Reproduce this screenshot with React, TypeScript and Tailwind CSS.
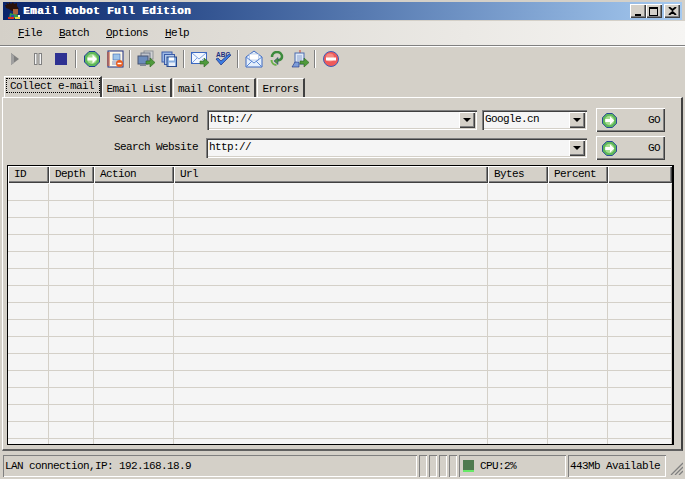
const raised =
  "shadow-[inset_1px_1px_0_#ffffff,inset_-1px_-1px_0_#404040,inset_-2px_-2px_0_#808080]";
const sunken =
  "shadow-[inset_1px_1px_0_#808080,inset_2px_2px_0_#404040,inset_-1px_-1px_0_#ffffff,inset_-2px_-2px_0_#d4d0c8]";
const thinSunken = "shadow-[inset_1px_1px_0_#808080,inset_-1px_-1px_0_#ffffff]";
const text = "text-[11px] tracking-[-0.6px] text-black whitespace-pre";

function GoIcon({ size = 16 }: { size?: number }) {
  return (
    <svg width={size} height={size} viewBox="0 0 16 16">
      <path d="M5 .5h6L15.500 5v6L11 15.500H5L.5 11V5z" fill="#5fb85a" stroke="#1c3f94" />
      <circle cx="8" cy="8" r="5" fill="#a4dc8e" />
      <path d="M3.500 6.500h5V3.500L13 8l-4.500 4.500v-3h-5z" fill="#fff" />
    </svg>
  );
}

function AppIcon() {
  return (
    <svg width="18" height="18" viewBox="0 0 18 18" className="ml-[1px]">
      <path d="M1 3l2 0-1-2 3 1 0-2 2 2 2-2 1 2 3-1 0 3 2 3-3 2H8L5 7 2 6z" fill="#2a120c" />
      <path d="M9 7h5v5l-2 1H9z" fill="#a8623a" />
      <path d="M6 11l3 1 5 1 1 3H5z" fill="#2f9a4a" />
      <path d="M7 13h3v2H7z" fill="#2848b0" />
      <path d="M11 15h5v2h-5z" fill="#e8d840" />
      <path d="M4 15h6v2H4z" fill="#d83020" />
      <path d="M14 13h2v2h-2z" fill="#f0f0f0" />
    </svg>
  );
}

function Play() {
  return (
    <svg width="16" height="16" viewBox="0 0 16 16">
      <path d="M4 2l8 6-8 6z" fill="#808080" />
      <path d="M4 2l0 12 3-2V5z" fill="#a0a0a0" />
    </svg>
  );
}

function Pause() {
  return (
    <svg width="16" height="16" viewBox="0 0 16 16">
      <path d="M4 2h3.500v12H4zM8.500 2H12v12H8.500z" fill="#808080" />
      <path d="M5 3h1.500v10H5zM9.500 3H11v10H9.500z" fill="#f4f4f4" />
    </svg>
  );
}

function Stop() {
  return (
    <svg width="16" height="16" viewBox="0 0 16 16">
      <rect x="2" y="2" width="12" height="12" fill="#2e3192" />
    </svg>
  );
}

function Notebook() {
  return (
    <svg width="18" height="18" viewBox="0 0 18 18">
      <rect x="2" y="1" width="15" height="16" fill="#fdf8e8" stroke="#1c2f80" />
      <path d="M1 3h3M1 5h3M1 7h3M1 9h3M1 11h3M1 13h3M1 15h3" stroke="#c04020" />
      <rect x="7" y="4" width="7" height="6" fill="#9cc4ea" stroke="#3c66b0" strokeWidth=".6" />
      <path d="M6 12h5M6 14h4" stroke="#8090c0" />
      <circle cx="13.500" cy="13.500" r="3.500" fill="#e85a1c" />
      <path d="M11.500 13.500h4" stroke="#fff" strokeWidth="1.500" />
    </svg>
  );
}

function Monitors() {
  return (
    <svg width="18" height="18" viewBox="0 0 18 18">
      <rect x="7" y="1" width="9" height="8" fill="#d0d2d4" stroke="#909498" />
      <rect x="4" y="3" width="9" height="8" fill="#c0c4cc" stroke="#707888" />
      <rect x="1" y="6" width="10" height="8" fill="#6c8cbc" stroke="#485470" />
      <path d="M3 14h6v2H3z" fill="#808898" />
      <path d="M9 11h4V8l5 4.500L13 17v-3H9z" fill="#4f9a3c" stroke="#2c6420" strokeWidth=".6" />
    </svg>
  );
}

function Floppies() {
  return (
    <svg width="16" height="16" viewBox="0 0 16 16">
      <rect x="1" y="1" width="10" height="10" fill="#9cb8e4" stroke="#3c5ca8" />
      <rect x="3.500" y="3.500" width="10" height="10" fill="#b4ccec" stroke="#3c5ca8" />
      <rect x="6" y="6" width="9.500" height="9.500" fill="#88aee0" stroke="#28488c" />
      <rect x="8" y="6.500" width="5" height="3" fill="#fff" />
      <rect x="8" y="11.500" width="6" height="3.500" fill="#e8eef8" />
    </svg>
  );
}

function MailSend() {
  return (
    <svg width="18" height="18" viewBox="0 0 18 18">
      <rect x=".5" y="2.500" width="15" height="11" fill="#f2f7ff" stroke="#3c68c0" />
      <path d="M1 3l7 6 7-6M1 13l5-5M15 13l-4-4" fill="none" stroke="#80a4e0" />
      <path d="M9 11h4V8l5 4.500L13 17v-3H9z" fill="#4f9a3c" stroke="#2c6420" strokeWidth=".6" />
    </svg>
  );
}

function SpellCheck() {
  return (
    <svg width="18" height="18" viewBox="0 0 18 18">
      <text x="2" y="6.500" fontSize="6.500" fontWeight="bold" fontFamily="Liberation Sans, sans-serif" fill="#1c2f80">
        ABC
      </text>
      <path d="M2 9l5 6L17 5l-2-1-8 7-3-3z" fill="#3c7ce0" stroke="#1c2f80" strokeWidth=".7" />
    </svg>
  );
}

function MailOpen() {
  return (
    <svg width="18" height="18" viewBox="0 0 18 18">
      <path d="M1 7l8-6 8 6v10H1z" fill="#e4effc" stroke="#3c68c0" />
      <rect x="4.500" y="4" width="9" height="6" fill="#fff" stroke="#a0b8e0" strokeWidth=".6" />
      <path d="M1 7l8 6 8-6M1 17l6-6M17 17l-6-6" fill="none" stroke="#5c88d4" />
    </svg>
  );
}

function Recycle() {
  return (
    <svg width="16" height="16" viewBox="0 0 16 16">
      <path d="M3 6a5 5 0 0 1 10 0c0 2-2 3-4 3.500" fill="none" stroke="#3c8a3c" strokeWidth="2.500" />
      <path d="M9 6.500L5 10l4 3.500z" fill="#4f9a3c" stroke="#1c2f80" strokeWidth=".5" />
      <path d="M2.500 9a5 5 0 0 0 5 5" fill="none" stroke="#6cb04c" strokeWidth="2" />
    </svg>
  );
}

function PageSend() {
  return (
    <svg width="18" height="18" viewBox="0 0 18 18">
      <path d="M9 0v3" stroke="#d04030" />
      <rect x="4" y="3" width="9" height="11" fill="#dfe8f6" stroke="#4c6cb0" />
      <path d="M6 6h5M6 8h5M6 10h5" stroke="#8ca4d0" />
      <path d="M1 17l3-5h4v5z" fill="#7c9cd8" stroke="#1c2f80" strokeWidth=".6" />
      <path d="M9 11h4V8l5 4.500L13 17v-3H9z" fill="#4f9a3c" stroke="#2c6420" strokeWidth=".6" />
    </svg>
  );
}

function NoEntry() {
  return (
    <svg width="16" height="16" viewBox="0 0 16 16">
      <circle cx="8" cy="8" r="7.500" fill="#ee5a5a" stroke="#3c5cb8" />
      <circle cx="7" cy="6.500" r="4" fill="#f58a80" />
      <rect x="3" y="6.500" width="10" height="3" fill="#fff" />
    </svg>
  );
}

function ToolBtn({ children }: { children: React.ReactNode }) {
  return <div className="w-[23px] flex items-center justify-center">{children}</div>;
}

function Sep() {
  return (
    <div className="w-[8px] flex justify-center">
      <div className="w-[2px] h-[18px] border-l border-[#808080] bg-white" />
    </div>
  );
}

function DropArrow() {
  return (
    <div className={`w-[16px] h-[16px] bg-[#d4d0c8] flex items-center justify-center ${raised}`}>
      <div className="w-0 h-0 border-x-[4px] border-x-transparent border-t-[4px] border-t-black" />
    </div>
  );
}

function Combo({ value, className }: { value: string; className: string }) {
  return (
    <div className={`h-[20px] bg-[#f5f5f5] flex items-center justify-between pl-[3px] pr-[2px] ${sunken} ${className}`}>
      <span className={`${text} mb-[2px]`}>{value}</span>
      <DropArrow />
    </div>
  );
}

function GoButton() {
  return (
    <div className={`w-[69px] h-[24px] bg-[#d4d0c8] flex items-center justify-between pl-[6px] pr-[5px] ${raised}`}>
      <GoIcon size={15} />
      <span className={text}>GO</span>
    </div>
  );
}

const columns = [
  { name: "ID", width: "w-[41px]" },
  { name: "Depth", width: "w-[45px]" },
  { name: "Action", width: "w-[80px]" },
  { name: "Url", width: "w-[314px]" },
  { name: "Bytes", width: "w-[60px]" },
  { name: "Percent", width: "w-[60px]" },
  { name: "", width: "flex-1" },
];

const rows = Array.from({ length: 16 });

export default function App() {
  return (
    <div className="w-[685px] h-[479px] overflow-hidden bg-[#d4d0c8] flex flex-col font-['Liberation_Mono',monospace]">
      {/* title bar */}
      <div className="mt-[2px] mx-[3px] h-[18px] shrink-0 bg-gradient-to-r from-[#0a246a] to-[#a6caf0] flex items-center pr-[2px]">
        <AppIcon />
        <span className="ml-[1px] mt-[1px] text-[11px] font-bold tracking-[0.4px] text-white whitespace-pre flex-1 [text-shadow:0.5px_0_0_#fff]">
          Email Robot Full Edition
        </span>
        <div className={`w-[16px] h-[14px] bg-[#d4d0c8] flex items-end justify-center pb-[2px] ${raised}`}>
          <div className="w-[6px] h-[2px] bg-black mr-[1px]" />
        </div>
        <div className={`w-[16px] h-[14px] bg-[#d4d0c8] flex items-center justify-center ${raised}`}>
          <div className="w-[9px] h-[9px] border border-t-2 border-black mr-[1px]" />
        </div>
        <div className={`ml-[2px] w-[16px] h-[14px] bg-[#d4d0c8] flex items-center justify-center ${raised}`}>
          <svg width="9" height="8" viewBox="0 0 9 8">
            <path d="M1 0l3.500 3L8 0M1 8l3.500-3L8 8" fill="none" stroke="#000" strokeWidth="1.800" />
          </svg>
        </div>
      </div>

      {/* menu bar */}
      <div className="mt-[1px] h-[25px] shrink-0 bg-gradient-to-r from-[#d4d0c8] to-[#f6f5f3] flex items-center pl-[18px] pt-[1px] border-b border-[#808080]">
        <div className={`${text} mr-[17px]`}>
          <span className="underline">F</span>ile
        </div>
        <div className={`${text} mr-[17px]`}>
          <span className="underline">B</span>atch
        </div>
        <div className={`${text} mr-[17px]`}>
          <span className="underline">O</span>ptions
        </div>
        <div className={text}>
          <span className="underline">H</span>elp
        </div>
      </div>
      <div className="h-[1px] shrink-0 bg-white" />

      {/* toolbar */}
      <div className="h-[24px] shrink-0 flex items-center pl-[3px]">
        <ToolBtn><Play /></ToolBtn>
        <ToolBtn><Pause /></ToolBtn>
        <ToolBtn><Stop /></ToolBtn>
        <Sep />
        <ToolBtn><GoIcon /></ToolBtn>
        <ToolBtn><Notebook /></ToolBtn>
        <Sep />
        <ToolBtn><Monitors /></ToolBtn>
        <ToolBtn><Floppies /></ToolBtn>
        <Sep />
        <ToolBtn><MailSend /></ToolBtn>
        <ToolBtn><SpellCheck /></ToolBtn>
        <Sep />
        <ToolBtn><MailOpen /></ToolBtn>
        <ToolBtn><Recycle /></ToolBtn>
        <ToolBtn><PageSend /></ToolBtn>
        <Sep />
        <ToolBtn><NoEntry /></ToolBtn>
      </div>

      {/* tabs */}
      <div className="mt-[6px] h-[20px] shrink-0 flex items-end pl-[4px] relative z-10">
        <div className="w-[98px] h-[21px] bg-[#d4d0c8] border-t border-l border-white border-r-[2px] border-r-[#404040] flex items-start pt-[1px] pl-[1px]">
          <div className={`${text} w-[94px] h-[15px] leading-[15px] pl-[3px] border border-dotted border-black`}>
            Collect e-mail
          </div>
        </div>
        <div className={`${text} w-[70px] h-[19px] leading-[20px] text-center bg-[#d4d0c8] border-t border-l border-white border-r-[2px] border-r-[#404040]`}>
          Email List
        </div>
        <div className={`${text} ml-[1px] w-[83px] h-[19px] leading-[20px] text-center bg-[#d4d0c8] border-t border-l border-white border-r-[2px] border-r-[#404040]`}>
          mail Content
        </div>
        <div className={`${text} ml-[1px] w-[48px] h-[19px] leading-[20px] text-center bg-[#d4d0c8] border-t border-l border-white border-r-[2px] border-r-[#404040]`}>
          Errors
        </div>
      </div>

      {/* tab page */}
      <div className="mx-[2px] h-[354px] shrink-0 flex flex-col border-t border-l border-white border-r-2 border-r-[#404040] border-b-2 border-b-[#606060] pl-[4px] pr-[8px]">
        <div className="mt-[10px] h-[24px] flex items-center">
          <div className={`${text} w-[191px] text-right mb-[2px]`}>Search keyword</div>
          <Combo value="http://" className="ml-[9px] w-[270px]" />
          <Combo value="Google.cn" className="ml-[5px] w-[105px]" />
          <div className="ml-[9px]"><GoButton /></div>
        </div>
        <div className="mt-[4px] h-[24px] flex items-center">
          <div className={`${text} w-[191px] text-right mb-[2px]`}>Search Website</div>
          <Combo value="http://" className="ml-[8px] w-[381px]" />
          <div className="ml-[9px]"><GoButton /></div>
        </div>

        {/* url table */}
        <div className="mt-[5px] w-[667px] h-[280px] border border-black border-r-2 bg-[#f5f5f5] overflow-hidden">
          <div className="flex h-[17px] mb-[1px]">
            {columns.map((col) => (
              <div
                key={col.name || "rest"}
                className={`${col.width} ${text} h-[17px] leading-[17px] pl-[6px] bg-[#d4d0c8] ${raised}`}
              >
                {col.name}
              </div>
            ))}
          </div>
          {rows.map((_, i) => (
            <div key={i} className="flex h-[17px]">
              {columns.map((col) => (
                <div
                  key={col.name || "rest"}
                  className={`${col.width} border-r border-b border-[#d4d0c8]`}
                />
              ))}
            </div>
          ))}
        </div>
      </div>

      {/* status bar */}
      <div className="mt-[4px] h-[22px] shrink-0 flex pl-[3px]">
        <div className={`${text} w-[414px] leading-[22px] pl-[2px] ${thinSunken}`}>
          LAN connection,IP: 192.168.18.9
        </div>
        <div className="ml-[2px] flex gap-[2px]">
          <div className={`w-[8px] ${thinSunken}`} />
          <div className={`w-[8px] ${thinSunken}`} />
          <div className={`w-[8px] ${thinSunken}`} />
          <div className={`w-[8px] ${thinSunken}`} />
        </div>
        <div className={`ml-[2px] w-[107px] flex items-center pl-[4px] ${thinSunken}`}>
          <div className="w-[11px] h-[12px] bg-[#4f7a4f] border-b-2 border-b-[#66e866]" />
          <span className={`${text} ml-[6px]`}>CPU:2%</span>
        </div>
        <div className={`${text} ml-[2px] w-[98px] leading-[22px] pl-[2px] ${thinSunken}`}>
          443Mb Available
        </div>
        <svg width="13" height="13" viewBox="0 0 13 13" className="ml-[4px] self-end mb-[2px]">
          <path d="M1 13L13 1M5 13l8-8M9 13l4-4" stroke="#808080" strokeWidth="1.300" />
        </svg>
      </div>
    </div>
  );
}
